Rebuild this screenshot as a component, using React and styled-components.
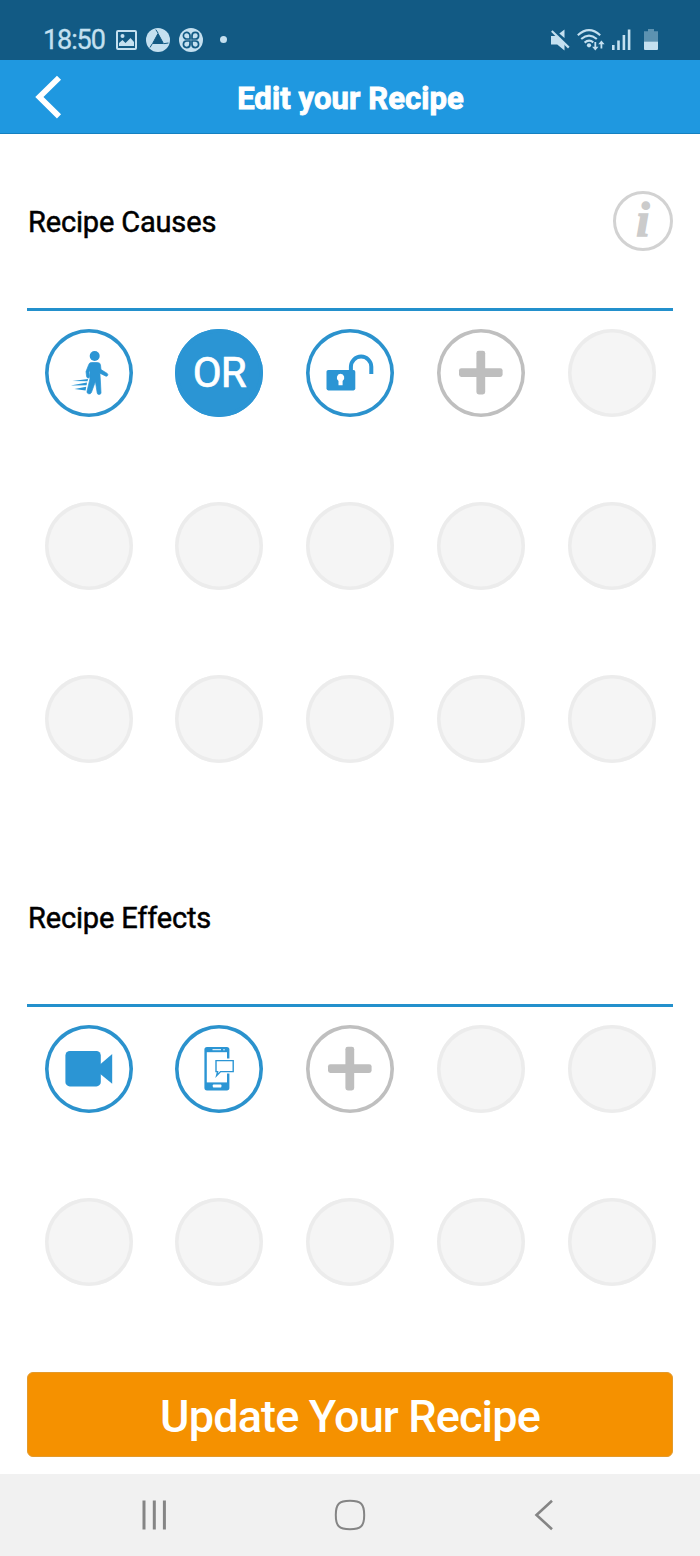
import React from "react"
import styled, { createGlobalStyle } from "styled-components"

const causes = ["walk", "or", "unlock", "add", ...Array(11).fill("empty")]
const effects = ["camera", "message", "add", ...Array(7).fill("empty")]

const WalkIcon = () => (
  <Icon viewBox="0 0 88 88">
    <circle cx="49.7" cy="27" r="5" />
    <path
      d="M46.4 33.5H52.6Q55.2 33.5 55.5 36L56 40.6L62.2 44.4Q63.3 45.3 62.6 46.6Q61.9 47.6 60.5 47L54.9 44.2L55.4 52L56 63.8Q55.9 65.5 54.2 65.5Q52.4 65.5 52.2 64L50.4 52.5L46.4 63.6Q45.6 65.2 43.7 64.8Q41.6 64.3 42 62.4L44.9 50V41L43.9 43.2L44.6 47.6Q44.4 49.2 43 49Q41.8 48.8 41.6 47.6L41 42.6L43.8 35.4Q44.5 33.5 46.4 33.5Z"
      stroke="currentColor"
      strokeWidth="0.7"
    />
    <path d="M27.5 52.1L43 49.9L42.6 52.2ZM25.5 56.5L42 53.6L41.6 56.2ZM29.5 60L41.2 57.8L40.6 61.4Z" />
  </Icon>
)

const UnlockIcon = () => (
  <Icon viewBox="0 0 88 88">
    <rect x="20.5" y="41" width="28.8" height="20.4" rx="1.8" />
    <path
      d="M44.9 42V37.8A10.2 10.2 0 0 1 65.3 37.8V45"
      fill="none"
      stroke="currentColor"
      strokeWidth="4"
    />
    <path
      d="M34.5 44.8a3.9 3.9 0 0 1 2.1 7.1V56.3H32.5V51.9a3.9 3.9 0 0 1 2-7.1Z"
      fill="#fff"
    />
  </Icon>
)

const PlusIcon = () => (
  <Icon viewBox="0 0 88 88">
    <rect x="22" y="39.2" width="43.6" height="8.8" rx="2.4" />
    <rect x="39.4" y="21.8" width="8.8" height="43.6" rx="2.4" />
  </Icon>
)

const CameraIcon = () => (
  <Icon viewBox="0 0 88 88">
    <rect x="20.4" y="26" width="35.4" height="35.4" rx="4.4" />
    <path d="M55 39.6L67.2 29V58.8L55 48.8Z" />
  </Icon>
)

const MessageIcon = () => (
  <Icon viewBox="0 0 88 88">
    <rect x="29.4" y="22" width="25" height="43.4" rx="2.6" />
    <rect x="31.8" y="27.2" width="20.2" height="30.2" fill="#fff" />
    <path d="M37.5 24.7H46" stroke="#fff" strokeWidth="1" />
    <circle cx="49" cy="24.7" r="0.7" fill="#fff" />
    <rect x="37.8" y="59.6" width="8.6" height="2.9" rx="0.7" fill="#fff" />
    <path d="M39 33.5H60V48.5H47L39 55Z" fill="#fff" />
    <path
      d="M41 35.6H58.2V46.6H45.6L41.6 50.6L42.6 46.6H41Z"
      fill="#fff"
      stroke="currentColor"
      strokeWidth="1.4"
    />
  </Icon>
)

const OrLabel = () => <Operator>OR</Operator>

const icons = {
  walk: WalkIcon,
  or: OrLabel,
  unlock: UnlockIcon,
  add: PlusIcon,
  camera: CameraIcon,
  message: MessageIcon,
}

const StatusBar = () => (
  <Status>
    <Clock>18:50</Clock>
    <StatusIcons>
      <svg width="21" height="20" viewBox="0 0 21 20">
        <rect x="1" y="1" width="19" height="18" rx="1" fill="none" stroke="currentColor" strokeWidth="2" />
        <circle cx="6.5" cy="6" r="2" />
        <path d="M3 16V13L6.5 10L9.5 13L14.5 8L18 12V16Z" />
      </svg>
      <svg width="24" height="24" viewBox="0 0 24 24">
        <circle cx="12" cy="12" r="12" />
        <path
          d="M12 5.5L17.4 15.5H6.6Z"
          fill="#125a84"
          stroke="#125a84"
          strokeLinejoin="round"
        />
        <path
          d="M12 5L9.8 1.6M17.7 15.7L22.5 15M6.3 15.7L4 19.5"
          stroke="#125a84"
          strokeWidth="1"
        />
      </svg>
      <svg width="24" height="24" viewBox="0 0 24 24">
        <circle cx="12" cy="12" r="12" />
        <g fill="none" stroke="#125a84" strokeWidth="1.7">
          <path d="M11 11H8A3.3 3.3 0 1 1 11 7.6ZM13 11V7.6A3.3 3.3 0 1 1 16.4 11Z" />
          <path d="M11 13V16.4A3.3 3.3 0 1 1 7.6 13ZM13 13H16.4A3.3 3.3 0 1 1 13 16.4Z" />
        </g>
      </svg>
      <Dot />
    </StatusIcons>
    <SignalIcons>
      <svg width="20" height="22" viewBox="0 0 20 22">
        <path d="M1 7H6L14.5 13.5V21.5L7.2 15.5H1ZM14.5 0.5V9L9.3 4.6Z" />
        <path d="M2.9 1.2L20 17.6" stroke="#125a84" strokeWidth="1.6" />
        <path d="M1.8 2L18.8 18.6" stroke="currentColor" strokeWidth="2.2" />
      </svg>
      <svg width="28" height="22" viewBox="0 0 28 22">
        <g fill="none" stroke="currentColor" strokeWidth="2.1">
          <path d="M0.8 6.2Q12 -3.8 23.2 6.2" />
          <path d="M4.2 10Q12 3.2 19.8 10" />
          <path d="M7.6 13.6Q12 9.8 16.3 13.4" />
        </g>
        <circle cx="12" cy="16.3" r="2.1" />
        <path d="M17.4 13H19.2V17.8H21.5L18.3 21.4L15.1 17.8H17.4ZM23.5 19.5H25.3V15.2H27.6L24.4 11.6L21.2 15.2H23.5Z" />
      </svg>
      <svg width="19" height="21" viewBox="0 0 19 21">
        <path d="M0 16H2.6V21H0ZM5.2 11.5H7.8V21H5.2ZM10.6 6H13.2V21H10.6ZM15.8 0.5H18.4V21H15.8Z" />
      </svg>
      <svg width="14" height="21" viewBox="0 0 14 21">
        <path d="M4 0H10V2.2H14V12.5H0V2.2H4Z" opacity="0.42" />
        <path d="M0 12.5H14V20Q14 21 13 21H1Q0 21 0 20Z" />
      </svg>
    </SignalIcons>
  </Status>
)

const Slots = ({ items }) => (
  <SlotGrid>
    {items.map((kind, i) => {
      const Content = icons[kind]
      return (
        <Slot key={i} $kind={kind}>
          {Content && <Content />}
        </Slot>
      )
    })}
  </SlotGrid>
)

const App = () => {
  return (
    <Screen>
      <GlobalStyle />
      <StatusBar />
      <Header>
        <svg width="28" height="46" viewBox="0 0 28 46">
          <path
            d="M24 3.8L4.4 23L24 42.4"
            fill="none"
            stroke="#fff"
            strokeWidth="5.8"
          />
        </svg>
        <h1>Edit your Recipe</h1>
      </Header>
      <Main>
        <SectionHeader>
          <h2>Recipe Causes</h2>
          <InfoButton>i</InfoButton>
        </SectionHeader>
        <Slots items={causes} />
        <SectionHeader $spaced>
          <h2>Recipe Effects</h2>
        </SectionHeader>
        <Slots items={effects} />
        <UpdateButton>Update Your Recipe</UpdateButton>
      </Main>
      <NavBar>
        <svg width="26" height="30" viewBox="0 0 26 30">
          <path d="M2 0.5V29.5M12.3 0.5V29.5M22.4 0.5V29.5" strokeWidth="3" />
        </svg>
        <svg width="32" height="32" viewBox="0 0 32 32">
          <path
            d="M16 1.8C27 1.8 30.2 5 30.2 16S27 30.2 16 30.2S1.8 27 1.8 16S5 1.8 16 1.8Z"
            strokeWidth="2"
          />
        </svg>
        <svg width="20" height="32" viewBox="0 0 20 32">
          <path d="M18 1.8L2.5 16L18 30.2" strokeWidth="2.6" />
        </svg>
      </NavBar>
    </Screen>
  )
}

export default App

const GlobalStyle = createGlobalStyle`
  * {
    box-sizing: border-box;
  }
  body {
    margin: 0;
    background: #ffffff;
    font-family: Roboto, sans-serif;
  }
  h1,
  h2 {
    margin: 0;
  }
  svg {
    display: block;
    flex-shrink: 0;
  }
`

const Screen = styled.div`
  width: 700px;
  height: 1556px;
  display: flex;
  flex-direction: column;
  overflow: hidden;
`

const Status = styled.div`
  height: 60px;
  flex-shrink: 0;
  display: flex;
  align-items: center;
  padding: 19px 42px 0 43px;
  background: #125a84;
  color: #c4e0f0;

  svg {
    fill: currentColor;
  }
`

const Clock = styled.span`
  width: 73px;
  font-size: 27px;
  line-height: 40px;
  letter-spacing: -1.1px;
  white-space: nowrap;
  -webkit-text-stroke: 0.3px currentColor;
`

const StatusIcons = styled.div`
  display: flex;
  align-items: center;
  gap: 9px;
`

const Dot = styled.span`
  width: 7px;
  height: 7px;
  margin-left: 8px;
  border-radius: 50%;
  background: currentColor;
`

const SignalIcons = styled.div`
  display: flex;
  align-items: center;
  margin-left: auto;
  gap: 7px;

  svg:last-child {
    margin-left: 6px;
  }
`

const Header = styled.header`
  height: 74px;
  flex-shrink: 0;
  display: grid;
  grid-template-columns: 100px 1fr 100px;
  align-items: center;
  background: #1f98e0;
  border-bottom: 1px solid #1480c0;
  color: #ffffff;

  svg {
    margin-left: 35px;
  }

  h1 {
    text-align: center;
    font-size: 31px;
    font-weight: 700;
    line-height: 40px;
    letter-spacing: 0.08px;
    white-space: nowrap;
    padding-top: 4px;
    padding-left: 1px;
    -webkit-text-stroke: 0.9px currentColor;
  }
`

const Main = styled.main`
  flex: 1;
  padding: 0 27px;
`

const SectionHeader = styled.div`
  display: flex;
  align-items: center;
  justify-content: space-between;
  height: 177px;
  margin-top: ${props => (props.$spaced ? "67px" : "0")};
  border-bottom: 3px solid #2390cc;

  h2 {
    padding-left: 1px;
    padding-top: ${props => (props.$spaced ? "2px" : "1px")};
    font-size: 29px;
    font-weight: 400;
    line-height: 40px;
    letter-spacing: -0.16px;
    color: #000000;
    -webkit-text-stroke: 0.5px currentColor;
  }
`

const InfoButton = styled.span`
  width: 60px;
  height: 60px;
  border: 3px solid #d2d2d2;
  border-radius: 50%;
  color: #cbcbcb;
  text-align: center;
  font: italic 700 48px/52px "Liberation Serif", serif;
  -webkit-text-stroke: 1.4px currentColor;
`

const SlotGrid = styled.div`
  display: grid;
  grid-template-columns: repeat(5, 130.75px);
  grid-auto-rows: 88px;
  row-gap: 85.4px;
  justify-items: center;
  justify-content: center;
  padding-top: 17.5px;
`

const slotColors = {
  empty: { border: "#ececec", fill: "#f5f5f5" },
  add: { border: "#bfbfbf", fill: "#ffffff", color: "#bebebe" },
  or: { border: "#2b95d4", fill: "#2b95d4", color: "#ffffff" },
}
const activeColors = { border: "#2b92cd", fill: "#ffffff", color: "#2b95d4" }
const slotColor = kind => slotColors[kind] || activeColors

const Slot = styled.div`
  width: 88px;
  height: 88px;
  display: flex;
  align-items: center;
  justify-content: center;
  border-radius: 50%;
  box-shadow: inset 0 0 0 3.6px ${props => slotColor(props.$kind).border};
  background: ${props => slotColor(props.$kind).fill};
  color: ${props => slotColor(props.$kind).color};
`

const Icon = styled.svg`
  width: 88px;
  height: 88px;
  fill: currentColor;
`

const Operator = styled.span`
  font-size: 42px;
  font-weight: 400;
  line-height: 50px;
  letter-spacing: -0.8px;
  -webkit-text-stroke: 0.7px currentColor;
`

const UpdateButton = styled.button`
  display: block;
  width: 646px;
  height: 85px;
  margin-top: 86px;
  padding: 4px 0 0;
  border: 1px solid #e39a2c;
  border-radius: 6px;
  background: #f59100;
  color: #ffffff;
  font-family: inherit;
  font-size: 45px;
  font-weight: 500;
  letter-spacing: -0.85px;
  white-space: nowrap;
`

const NavBar = styled.nav`
  height: 82px;
  flex-shrink: 0;
  display: grid;
  grid-template-columns: 1fr auto 1fr;
  align-items: center;
  background: #f1f1f1;

  svg {
    fill: none;
    stroke: #858585;
  }
  svg:first-child {
    margin-left: 142px;
  }
  svg:last-child {
    margin-left: 168px;
  }
`
